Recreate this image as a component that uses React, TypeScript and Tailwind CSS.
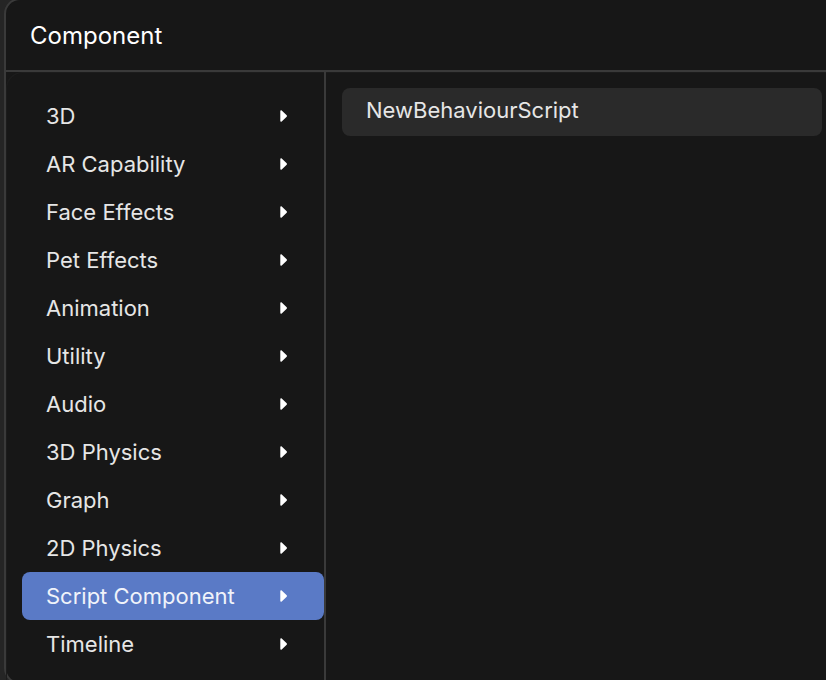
import { useState } from "react";
import clsx from "clsx";

const categories = [
  { name: "3D", components: [] },
  { name: "AR Capability", components: [] },
  { name: "Face Effects", components: [] },
  { name: "Pet Effects", components: [] },
  { name: "Animation", components: [] },
  { name: "Utility", components: [] },
  { name: "Audio", components: [] },
  { name: "3D Physics", components: [] },
  { name: "Graph", components: [] },
  { name: "2D Physics", components: [] },
  { name: "Script Component", components: ["NewBehaviourScript"] },
  { name: "Timeline", components: [] },
];

function Arrow() {
  return (
    <svg width="8" height="12" viewBox="0 0 8 12" fill="#ffffff" aria-hidden="true">
      <path d="M0.3 1.1C0.3 0.3 1.1 0 1.7 0.6L6.7 5.3C7.1 5.7 7.1 6.3 6.7 6.7L1.7 11.4C1.1 12 0.3 11.7 0.3 10.9Z" />
    </svg>
  );
}

export default function App() {
  const [selected, setSelected] = useState("Script Component");
  const current = categories.find((category) => category.name === selected);

  return (
    <div className="h-screen overflow-hidden bg-[#252525] pl-1 font-['Inter',sans-serif] text-[22px] leading-8 text-[#e6e6e6]">
      <section className="-mt-0.5 rounded-l-2xl border-2 border-r-0 border-[#3a3a3a] bg-[#171717]">
        {/* Title */}
        <header className="border-b-2 border-[#3a3a3a] px-6 pt-5 pb-[18px]">
          <h1 className="text-2xl font-normal text-white">Component</h1>
        </header>

        <div className="flex rounded-tl-2xl shadow-[inset_1px_1px_#1c1c1c]">
          {/* Categories */}
          <nav className="w-80 shrink-0 border-r-2 border-[#3a3a3a] pt-5 pb-3.5 pl-4">
            {categories.map((category) => (
              <button
                key={category.name}
                onClick={() => setSelected(category.name)}
                className={clsx(
                  "flex h-12 w-full cursor-pointer items-center justify-between rounded-lg pr-9 pl-6 text-left",
                  category.name === selected && "bg-[#5a7ac6] text-[#f0f3fa]"
                )}
              >
                {category.name}
                <Arrow />
              </button>
            ))}
          </nav>

          {/* Components of the selected category */}
          <div className="min-w-0 flex-1 pt-4 pr-1 pl-4">
            {current?.components.map((name) => (
              <button
                key={name}
                className="block w-full cursor-pointer rounded-lg bg-[#2a2a2a] px-6 pt-1.5 pb-2.5 text-left"
              >
                {name}
              </button>
            ))}
          </div>
        </div>
      </section>
    </div>
  );
}
